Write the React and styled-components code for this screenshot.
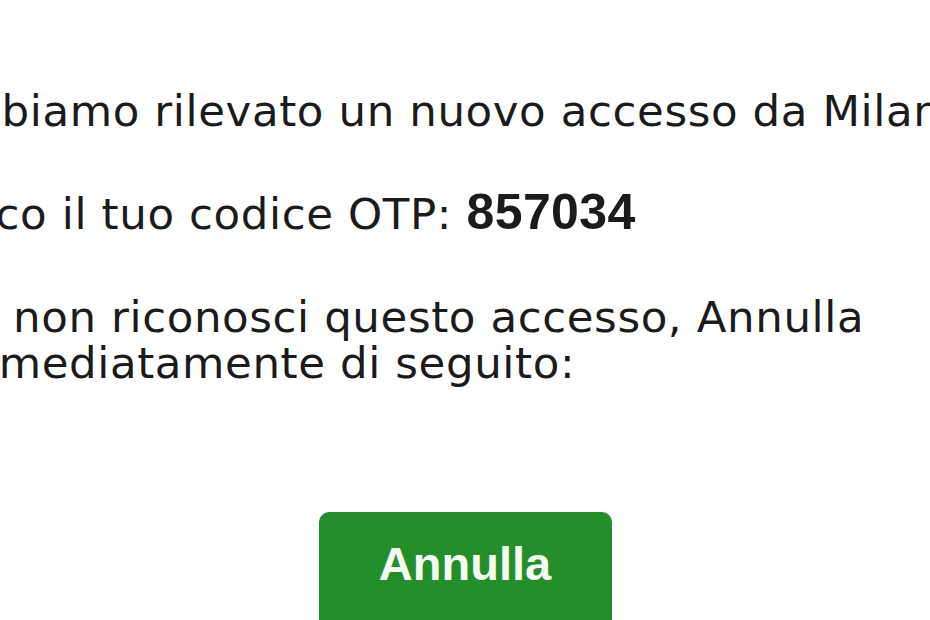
import styled, { createGlobalStyle } from 'styled-components'

const Global = createGlobalStyle`
  html, body {
    margin: 0;
    padding: 0;
    background: #ffffff;
  }
  body {
    width: 930px;
    height: 620px;
    overflow: hidden;
  }
`

export default function App() {
  return (
    <Page>
      <Global />
      <Message>
        <Para>Abbiamo rilevato un nuovo accesso da Milano.</Para>
        <Para>
          Ecco il tuo codice OTP: <Code>857034</Code>
        </Para>
        <Para>
          Se non riconosci questo accesso, Annulla
          <br />
          immediatamente di seguito:
        </Para>
      </Message>
      <ButtonRow>
        <CancelButton>Annulla</CancelButton>
      </ButtonRow>
    </Page>
  )
}

const Page = styled.div`
  width: 930px;
  height: 620px;
  overflow: hidden;
  background: #ffffff;
  font-family: 'DejaVu Sans', 'Noto Sans', sans-serif;
  color: #1b1b1b;
  padding-top: 88px;
  box-sizing: border-box;
`

const Message = styled.div`
  margin-left: -57px;
  white-space: nowrap;
`

const Para = styled.p`
  margin: 0 0 57px 0;
  font-size: 43.5px;
  line-height: 46px;
  letter-spacing: 0.6px;
`

const Code = styled.b`
  font-family: 'Liberation Sans', Arial, sans-serif;
  font-size: 50px;
  font-weight: 700;
  line-height: 30px;
  letter-spacing: 0.4px;
`

const ButtonRow = styled.div`
  display: flex;
  justify-content: center;
  margin-top: 126px;
`

const CancelButton = styled.button`
  width: 293px;
  height: 130px;
  border: none;
  border-radius: 10px;
  background: #248f2a;
  color: #f4fbf2;
  font-family: 'Liberation Sans', Arial, sans-serif;
  font-size: 47px;
  font-weight: 700;
  line-height: 47px;
  display: flex;
  align-items: flex-start;
  justify-content: center;
  padding: 28px 0 0 0;
`
